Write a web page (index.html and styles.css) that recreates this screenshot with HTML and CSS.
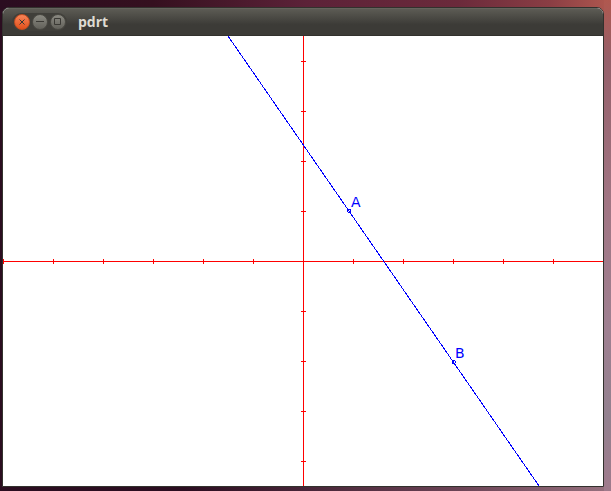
FILE: index.html
```html
<!DOCTYPE html>
<html lang="en">
<head>
<meta charset="utf-8">
<title>pdrt</title>
<link rel="stylesheet" href="styles.css">
</head>
<body>
<main class="window">
  <header class="titlebar">
    <div class="controls">
      <button class="control control-close" type="button" aria-label="Close">
        <svg class="glyph" viewBox="0 0 16 16"><path d="M5.500 5.500l5 5M10.500 5.500l-5 5"/></svg>
      </button>
      <button class="control" type="button" aria-label="Minimize">
        <svg class="glyph" viewBox="0 0 16 16"><path d="M4 7.500h8"/></svg>
      </button>
      <button class="control" type="button" aria-label="Maximize">
        <svg class="glyph" viewBox="0 0 16 16"><path d="M4.500 4.500h6v6h-6z"/></svg>
      </button>
    </div>
    <h1 class="title">pdrt</h1>
  </header>
  <svg class="plot" viewBox="0 0 600 450" role="img" aria-label="Line through points A and B">
    <path class="axis" d="M0 225.5H600M300.5 0V450"/>
    <path class="axis" d="M.5 223v5M50.5 223v5M100.5 223v5M150.5 223v5M200.5 223v5M250.5 223v5M350.5 223v5M400.5 223v5M450.5 223v5M500.5 223v5M550.5 223v5"/>
    <path class="axis" d="M298 25.5h5M298 75.5h5M298 125.5h5M298 175.5h5M298 275.5h5M298 325.5h5M298 375.5h5M298 425.5h5"/>
    <path class="line" d="M225 0L536 450"/>
    <path class="point" d="M345 173.500h3M345 176.500h3M344.500 174v2M347.500 174v2"/>
    <path class="point" d="M449 324.500h3M449 327.500h3M449.500 325v2M452.500 325v2"/>
    <text class="label" x="348" y="171">A</text>
    <text class="label" x="452" y="322">B</text>
  </svg>
</main>
</body>
</html>
```
FILE: styles.css
```css
* {
  box-sizing: border-box;
}

body {
  margin: 0;
  min-height: 100vh;
  padding: 7px 7px 4px 2px;
  background:
    linear-gradient(to bottom, #b0584f 0, #95606a 60px, #a17583 200px, #9f8091 330px, #93818f 420px, #a07a8c 100%) right / 7px 100% no-repeat,
    linear-gradient(to right, #2b0d20 0, #2b0d20 30%, #6b4355 75%, #97717f 100%) bottom / 100% 5px no-repeat,
    linear-gradient(to right, #2b0d20 0, #35101f 25%, #5c2238 50%, #6b2a3b 75%, #8a3e44 90%, #b0584f 100%);
}

.window {
  border: 1px solid #32312d;
  border-radius: 7px 7px 0 0;
  overflow: hidden;
  background: #fff;
}

.titlebar {
  display: flex;
  align-items: center;
  gap: 11px;
  height: 28px;
  padding: 0 9px;
  background: linear-gradient(#5c5b54, #3c3b37 60%, #3c3b37);
  border-top: 1px solid #65645d;
  border-bottom: 1px solid #32312d;
}

.controls {
  display: flex;
  gap: 2px;
  padding: 1px 1px 1px 2px;
  border-radius: 9px;
  background: #403f3a;
}

.control {
  width: 16px;
  height: 16px;
  padding: 0;
  border: 1px solid #4a4943;
  border-radius: 50%;
  background: linear-gradient(#8a8981, #62615a);
}

.control-close {
  border-color: #c14e22;
  background: linear-gradient(#f88458, #e2501b);
}

.glyph {
  display: block;
  width: 16px;
  height: 16px;
  margin: -1px;
  fill: none;
  stroke: #3a3934;
}

.title {
  margin: 0;
  color: #dfdbd2;
  font: bold 14px/20px "Open Sans", "Noto Sans", sans-serif;
}

.plot {
  display: block;
  width: 100%;
  height: auto;
}

.axis,
.line,
.point {
  fill: none;
  stroke-width: 1;
  shape-rendering: crispEdges;
}

.axis {
  stroke: #f00;
}

.line,
.point {
  stroke: #00f;
}

.label {
  fill: #00f;
  font: 14px "DejaVu Sans", sans-serif;
}
```
